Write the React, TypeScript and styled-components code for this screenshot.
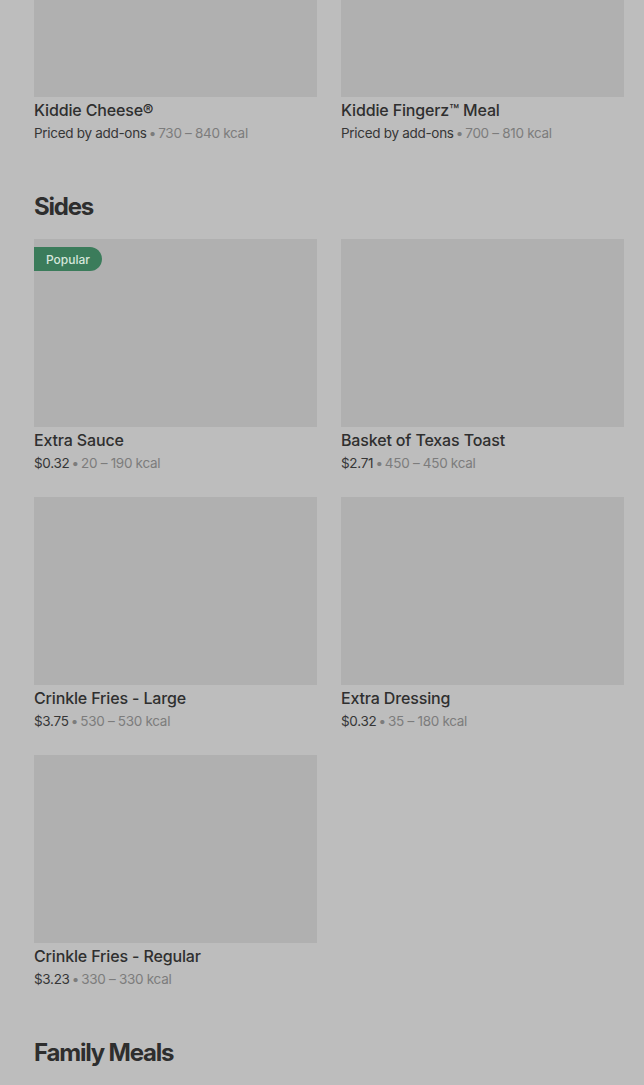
import React from "react";
import styled, { createGlobalStyle } from "styled-components";

const Global = createGlobalStyle`
  html, body { margin: 0; padding: 0; background: #bdbdbd; }
  body { font-family: Inter, "Noto Sans", "Liberation Sans", sans-serif; overflow: hidden; }
`;

const Page = styled.div`
  width: 644px;
  height: 1085px;
  overflow: hidden;
  background: #bdbdbd;
`;

const Content = styled.div`
  padding: 0 20px 0 34px;
  margin-top: -91px;
`;

const Section = styled.section<{ $first?: boolean }>`
  margin-top: ${(p) => (p.$first ? "0" : "47px")};
`;

const Heading = styled.h2`
  margin: 0 0 17px;
  padding-top: 1px;
  font-size: 24px;
  line-height: 31px;
  font-weight: 700;
  letter-spacing: -1.2px;
  color: #2e2e2e;
`;

const Grid = styled.div`
  display: grid;
  grid-template-columns: 283px 283px;
  column-gap: 24px;
  row-gap: 24px;
`;

const Card = styled.div`
  display: flex;
  flex-direction: column;
`;

const Thumb = styled.div`
  position: relative;
  height: 188px;
  background: #b0b0b0;
`;

const Badge = styled.span`
  position: absolute;
  top: 8px;
  left: 0;
  height: 24px;
  padding: 0 12px;
  display: flex;
  align-items: center;
  background: #3b7c5b;
  color: #d6e7dc;
  font-size: 12px;
  font-weight: 500;
  border-radius: 0 12px 12px 0;
`;

const Title = styled.div`
  margin-top: 3px;
  font-size: 16px;
  line-height: 20px;
  font-weight: 500;
  color: #2f2f2f;
  letter-spacing: -0.15px;
`;

const Meta = styled.div`
  margin-top: 3px;
  font-size: 13.5px;
  line-height: 20px;
  color: #7c7c7c;
  letter-spacing: -0.3px;
`;

const Price = styled.span`
  color: #363636;
`;

type Item = { name: string; price: string; kcal: string; popular?: boolean };

const kids: Item[] = [
  { name: "Kiddie Cheese®", price: "Priced by add-ons", kcal: "730 – 840 kcal" },
  { name: "Kiddie Fingerz™ Meal", price: "Priced by add-ons", kcal: "700 – 810 kcal" },
];

const sides: Item[] = [
  { name: "Extra Sauce", price: "$0.32", kcal: "20 – 190 kcal", popular: true },
  { name: "Basket of Texas Toast", price: "$2.71", kcal: "450 – 450 kcal" },
  { name: "Crinkle Fries - Large", price: "$3.75", kcal: "530 – 530 kcal" },
  { name: "Extra Dressing", price: "$0.32", kcal: "35 – 180 kcal" },
  { name: "Crinkle Fries - Regular", price: "$3.23", kcal: "330 – 330 kcal" },
];

const ItemCard = ({ item }: { item: Item }) => (
  <Card>
    <Thumb>{item.popular && <Badge>Popular</Badge>}</Thumb>
    <Title>{item.name}</Title>
    <Meta>
      <Price>{item.price}</Price>{"\u2009•\u2009"}{item.kcal}
    </Meta>
  </Card>
);

export default function App() {
  return (
    <Page>
      <Global />
      <Content>
        <Section $first>
          <Grid>
            {kids.map((i) => (
              <ItemCard key={i.name} item={i} />
            ))}
          </Grid>
        </Section>
        <Section>
          <Heading>Sides</Heading>
          <Grid>
            {sides.map((i) => (
              <ItemCard key={i.name} item={i} />
            ))}
          </Grid>
        </Section>
        <Section>
          <Heading>Family Meals</Heading>
        </Section>
      </Content>
    </Page>
  );
}
